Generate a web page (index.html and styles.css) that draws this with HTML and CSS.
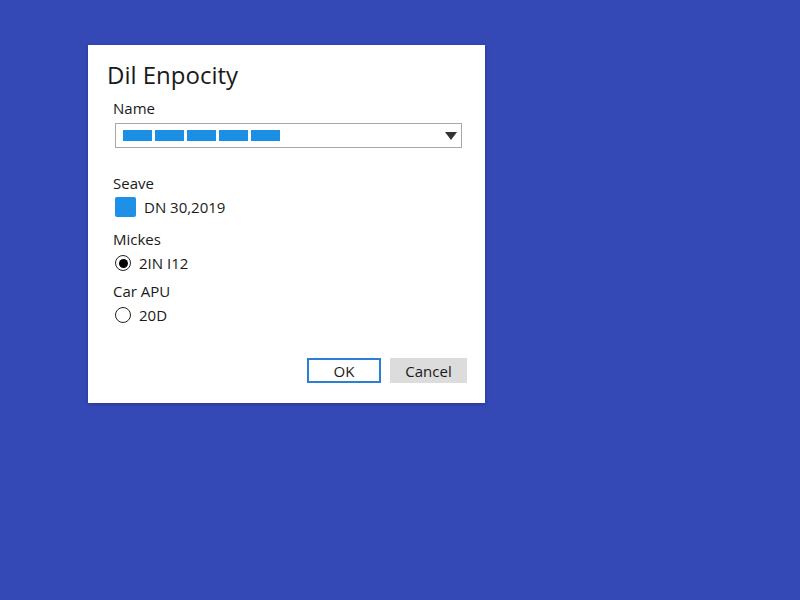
FILE: index.html
```html
<!DOCTYPE html>
<html lang="en">
<head>
    <meta charset="UTF-8">
    <title>Dil Enpocity</title>
    <link rel="stylesheet" href="styles.css">
</head>
<body>
    <div class="dialog">
        <h1 class="dialog-title">Dil Enpocity</h1>

        <div class="field field-name">
            <div class="field-label">Name</div>
            <div class="select">
                <div class="select-value">
                    <span class="block"></span>
                    <span class="block"></span>
                    <span class="block"></span>
                    <span class="block"></span>
                    <span class="block"></span>
                </div>
                <span class="select-arrow"></span>
            </div>
        </div>

        <div class="field field-save">
            <div class="field-label">Seave</div>
            <div class="option">
                <span class="checkbox"></span>
                <span class="option-text">DN 30,2019</span>
            </div>
        </div>

        <div class="field field-mickes">
            <div class="field-label">Mickes</div>
            <div class="option">
                <span class="radio checked"></span>
                <span class="option-text">2IN I12</span>
            </div>
        </div>

        <div class="field field-car">
            <div class="field-label">Car APU</div>
            <div class="option">
                <span class="radio"></span>
                <span class="option-text">20D</span>
            </div>
        </div>

        <div class="buttons">
            <button class="btn btn-primary">OK</button>
            <button class="btn">Cancel</button>
        </div>
    </div>
</body>
</html>
```

FILE: styles.css
```css
/* Desktop and dialog */
body {
    margin: 0;
    padding: 45px 0 0 88px;
    background-color: #3449b6;
    font-family: "Open Sans", "Noto Sans", sans-serif;
    color: #1a1a1a;
    height: 600px;
    box-sizing: border-box;
}

.dialog {
    width: 397px;
    height: 358px;
    box-sizing: border-box;
    background-color: #fff;
    padding: 14px 23px 0 19px;
    box-shadow: 0 1px 4px rgba(0, 0, 0, 0.25);
    display: flex;
    flex-direction: column;
}

.dialog-title {
    margin: 0;
    font-size: 24px;
    font-weight: 400;
    line-height: 32px;
}

.field {
    padding-left: 6px;
}

.field-name {
    margin-top: 6px;
}

.field-label {
    font-size: 15px;
    line-height: 22px;
}

.select {
    margin-top: 4px;
    margin-left: 2px;
    height: 25px;
    box-sizing: border-box;
    border: 1px solid #a8a8a8;
    display: flex;
    align-items: center;
    justify-content: space-between;
    padding: 0 4px 0 7px;
}

.select-value {
    display: flex;
    gap: 3px;
}

.block {
    width: 29px;
    height: 11px;
    background-color: #1a8fe3;
}

.select-arrow {
    width: 0;
    height: 0;
    border-left: 6px solid transparent;
    border-right: 6px solid transparent;
    border-top: 8px solid #333;
}

.field-save {
    margin-top: 24px;
}

.field-mickes {
    margin-top: 3px;
}

.field-car {
    margin-top: -1px;
}

.option {
    display: flex;
    align-items: center;
    gap: 8px;
    margin: 3px 0 8px 2px;
    font-size: 15px;
}

.checkbox {
    width: 21px;
    height: 20px;
    border-radius: 2px;
    background-color: #1e90e8;
}

.radio {
    width: 14px;
    height: 14px;
    border: 1.5px solid #222;
    border-radius: 50%;
    position: relative;
}

.radio.checked::after {
    content: '';
    position: absolute;
    left: 2.5px;
    top: 2.5px;
    width: 9px;
    height: 9px;
    border-radius: 50%;
    background-color: #000;
}

.buttons {
    margin-top: auto;
    margin-bottom: 20px;
    display: flex;
    justify-content: flex-end;
    gap: 9px;
    margin-right: -5px;
}

.btn {
    font-family: inherit;
    font-size: 15px;
    color: #1a1a1a;
    height: 25px;
    padding: 0;
    background-color: #dcdcdc;
    border: 1px solid #dcdcdc;
}

.btn:first-child {
    width: 74px;
}

.btn:last-child {
    width: 77px;
}

.btn-primary {
    background-color: #fff;
    border: 2px solid #2b7fd4;
}
```
